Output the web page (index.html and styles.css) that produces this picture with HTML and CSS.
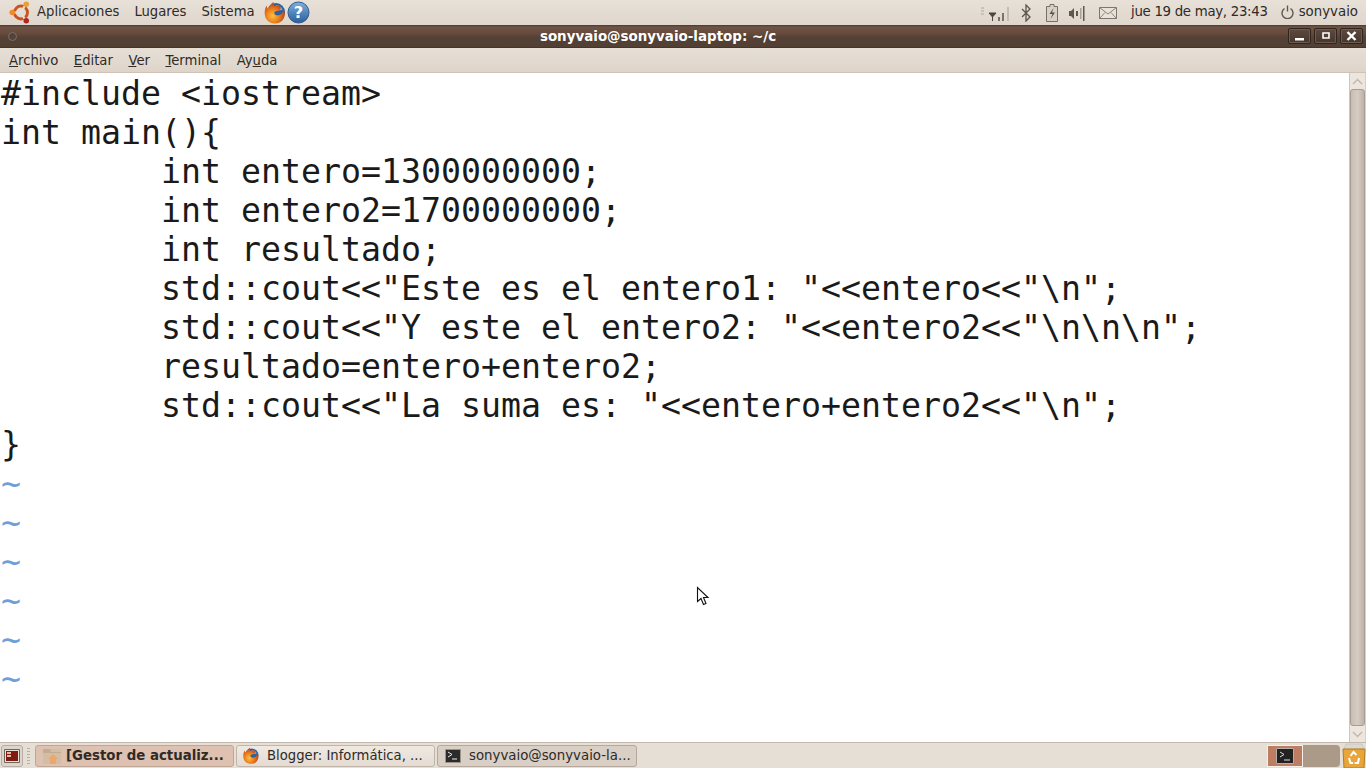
FILE: index.html
```html
<!DOCTYPE html>
<html lang="es">
<head>
<meta charset="utf-8">
<title>sonyvaio@sonyvaio-laptop: ~/c</title>
<link rel="stylesheet" href="styles.css">
</head>
<body>
<svg width="0" height="0" class="defs">
  <defs>
    <radialGradient id="fox" cx="40%" cy="65%" r="65%"><stop offset="0" stop-color="#f9c23c"/><stop offset="0.55" stop-color="#e8761c"/><stop offset="1" stop-color="#b03c18"/></radialGradient>
    <linearGradient id="globe" x1="0" y1="0" x2="0" y2="1"><stop offset="0" stop-color="#7fb0dc"/><stop offset="1" stop-color="#2a5d9c"/></linearGradient>
    <symbol id="firefox" viewBox="0 0 24 24">
      <circle cx="13" cy="11" r="9" fill="#2f5f9e"/>
      <path d="M13 4c3 0 6 2 6.500 5l-6 .5z" fill="#7fb0dc"/>
      <path d="M11 1c-.8 1.500-.6 3 .2 4 2.300-1.300 5.500-.8 6.500 1.200 .7 1.800-1 3.300-3.200 3.600-2.200.5-3.800 1.200-3 3 1 2 4.800 2 6.800.2 1.300-1.200 2.300-3.200 2.200-5 2.200 3.500 1.800 9.300-2.300 12.500-4.300 3.200-11.500 2.300-14.600-2C1 14.500 1 8.500 3.800 4.500c0 1.300.2 2.300 1 3.300C6 5 8.500 2 11 1z" fill="url(#fox)"/>
    </symbol>
  </defs>
</svg>
<div class="screen">
  <header class="top-panel">
    <div class="top-left">
      <svg class="ubuntu" viewBox="0 0 24 24" width="23" height="23">
        <circle cx="12.500" cy="12" r="6.800" fill="none" stroke="#c9541f" stroke-width="3"/>
        <path d="M12.500 12 L3 12 M12.500 12 L18 2.500 M12.500 12 L18 21.500" stroke="#e6dfd6" stroke-width="2.200"/>
        <circle cx="3.400" cy="12" r="2.900" fill="#f08a2c"/>
        <circle cx="18" cy="3.400" r="2.900" fill="#eba035"/>
        <circle cx="18" cy="20.600" r="2.900" fill="#b3261e"/>
      </svg>
      <span class="panel-item">Aplicaciones</span>
      <span class="panel-item">Lugares</span>
      <span class="panel-item">Sistema</span>
      <svg class="launcher" width="24" height="24" viewBox="0 0 24 24"><use href="#firefox"/></svg>
      <svg class="launcher help" width="23" height="23" viewBox="0 0 24 24">
        <circle cx="12" cy="12" r="11" fill="url(#globe)" stroke="#2c5a8c"/>
        <text x="12" y="18" class="help-q">?</text>
      </svg>
    </div>
    <div class="top-right">
      <svg class="tray net" width="28" height="18" viewBox="0 0 28 18">
        <path d="M0 4h3M0 7h3M0 10h3" stroke="#b0a89e"/>
        <path d="M8 9h7l-3.500 4zM11.500 13v4" fill="#4a453f" stroke="#4a453f"/>
        <path d="M17 13h2v4h-2zM21 9h2v8h-2z" fill="#7a736b"/>
        <path d="M26 3h2v14h-2z" fill="#c4bcb2"/>
      </svg>
      <svg class="tray bt" width="12" height="18" viewBox="0 0 12 18"><path d="M2 5l8 8-4 4V1l4 4-8 8" fill="none" stroke="#5a554e" stroke-width="1.300"/></svg>
      <svg class="tray batt" width="12" height="18" viewBox="0 0 12 18"><path d="M4 .5h4v2h3.500v15H.5v-15H4z" fill="#d8d0c6" stroke="#77706a"/><path d="M7.500 4L3.500 10h3l-2 5 4.500-6.500H6z" fill="#55504a"/></svg>
      <svg class="tray vol" width="16" height="16" viewBox="0 0 16 16"><path d="M0 6h2l3-3v11l-3-3H0z" fill="#5d5851"/><path d="M7 6h2v5H7z" fill="#5d5851"/><path d="M14 1h1.500v15H14z" fill="#5d5851"/><path d="M11 3h1.500v11H11z" fill="#a9a299"/></svg>
      <svg class="tray mail" width="18" height="12" viewBox="0 0 18 12"><path d="M.5.5h17v11H.5z" fill="#e8e2da" stroke="#7d766e"/><path d="M.5.5L9 7l8.500-6.500M.5 11.500L6 5.500M17.500 11.500L12 5.500" fill="none" stroke="#8a837b"/></svg>
      <span class="clock">jue 19 de may, 23:43</span>
      <span class="user">
        <svg width="13" height="14" viewBox="0 0 13 14"><path d="M3.500 3.500a5.500 5.500 0 1 0 6 0M6.500 .5v6" fill="none" stroke="#5d5851" stroke-width="1.400"/></svg>
        sonyvaio
      </span>
    </div>
  </header>

  <div class="window">
    <div class="titlebar">
      <span class="win-dot"></span>
      <span class="win-title">sonyvaio@sonyvaio-laptop: ~/c</span>
      <div class="win-buttons">
        <span class="win-btn"><svg width="10" height="10" viewBox="0 0 10 10"><path d="M0 7h9v2.500H0z" fill="#fff"/></svg></span>
        <span class="win-btn"><svg width="10" height="10" viewBox="0 0 10 10"><path d="M2 2h6v5H2z" fill="none" stroke="#fff" stroke-width="1.600"/></svg></span>
        <span class="win-btn"><svg width="11" height="10" viewBox="0 0 11 10"><path d="M1.500 1l8 8M9.500 1l-8 8" stroke="#fff" stroke-width="2.400"/></svg></span>
      </div>
    </div>
    <nav class="menubar">
      <span class="menu-item"><u>A</u>rchivo</span>
      <span class="menu-item"><u>E</u>ditar</span>
      <span class="menu-item"><u>V</u>er</span>
      <span class="menu-item"><u>T</u>erminal</span>
      <span class="menu-item">Ay<u>u</u>da</span>
    </nav>
    <div class="terminal">
      <pre class="code">#include &lt;iostream&gt;
int main(){
        int entero=1300000000;
        int entero2=1700000000;
        int resultado;
        std::cout&lt;&lt;"Este es el entero1: "&lt;&lt;entero&lt;&lt;"\n";
        std::cout&lt;&lt;"Y este el entero2: "&lt;&lt;entero2&lt;&lt;"\n\n\n";
        resultado=entero+entero2;
        std::cout&lt;&lt;"La suma es: "&lt;&lt;entero+entero2&lt;&lt;"\n";
}
<span class="tilde">~
~
~
~
~
~</span></pre>
      <div class="scrollbar">
        <span class="arrow"><svg width="11" height="7" viewBox="0 0 11 7"><path d="M1 6l4.500-4.500L10 6" fill="none" stroke="#c4b9ad" stroke-width="1.500"/></svg></span>
        <span class="thumb"></span>
        <span class="arrow"><svg width="11" height="7" viewBox="0 0 11 7"><path d="M1 1l4.500 4.500L10 1" fill="none" stroke="#c4b9ad" stroke-width="1.500"/></svg></span>
      </div>
    </div>
  </div>

  <footer class="bottom-panel">
    <span class="show-desktop"><svg width="16" height="14" viewBox="0 0 16 14"><path d="M.5.5h15v13H.5z" fill="#e8e2da" stroke="#6d665e"/><path d="M2 2h12v10H2z" fill="#7c1d10"/><path d="M3 3h4v2H3zM3 6h4v2H3z" fill="#e4b9a8"/></svg></span>
    <span class="grip"></span>
    <div class="task active">
      <svg width="20" height="18" viewBox="0 0 20 18"><path d="M1 2h18v15H1z" fill="#d3bda4"/><path d="M1 2h7l1 3h10v1H1z" fill="#c2ac92"/><path d="M11 7l5 5h-2v5H8v-5H6z" fill="#e8a870"/></svg>
      <span class="task-label strong">[Gestor de actualiz...</span>
    </div>
    <div class="task ff">
      <svg width="18" height="18" viewBox="0 0 24 24"><use href="#firefox"/></svg>
      <span class="task-label tight">Blogger: Informática, ...</span>
    </div>
    <div class="task term">
      <svg width="16" height="14" viewBox="0 0 16 14"><path d="M.5.5h15v13H.5z" fill="#2b2b2b" stroke="#9a948c"/><path d="M3 3l4 2.500L3 8" fill="none" stroke="#eee"/><path d="M7 10h5" stroke="#eee"/></svg>
      <span class="task-label">sonyvaio@sonyvaio-la...</span>
    </div>
    <div class="spacer"></div>
    <div class="pager">
      <span class="ws current"><svg width="18" height="16" viewBox="0 0 18 16"><path d="M.5.5h17v15H.5z" fill="#222" stroke="#b5aea6"/><path d="M4 4l4 2.500L4 9" fill="none" stroke="#ddd"/><path d="M8 12h6" stroke="#ddd"/></svg></span>
      <span class="ws"></span>
    </div>
    <svg class="trash" width="24" height="25" viewBox="0 0 24 25">
      <path d="M2 6l2-5h16l2 5z" fill="#dcd9d2" stroke="#b9b5ac" stroke-width=".5"/>
      <path d="M1 6h22l-1 19H2z" fill="#e8a53a" stroke="#b27a22"/>
      <path d="M8.500 13l3-4 3 3M17 15l-1 5h-3.500M7 15l1.500 5H11" fill="none" stroke="#fff" stroke-width="2"/>
    </svg>
  </footer>

  <svg class="cursor" width="14" height="21" viewBox="0 0 14 21"><path d="M1.500 1.500v14l3.500-3 2.500 6 2.500-1-2.500-6h4.500z" fill="#fff" stroke="#111" stroke-width="1.100"/></svg>
</div>
</body>
</html>
```

FILE: styles.css
```css
* { box-sizing: border-box; }
html, body { margin: 0; padding: 0; }
body { width: 1366px; height: 768px; overflow: hidden; font-family: "DejaVu Sans", sans-serif; font-size: 13.2px; color: #2e2a26; }
.defs { position: absolute; }
.screen { position: relative; width: 1366px; height: 768px; display: flex; flex-direction: column; background: #fff; }

.top-panel { height: 25px; flex: none; display: flex; justify-content: space-between; align-items: center; background: linear-gradient(#e8e1d9, #dfd6cc); }
.top-left { display: flex; align-items: center; padding-left: 9px; }
.ubuntu { margin-right: 5px; }
.panel-item { margin-right: 15px; padding-bottom: 2px; }
.panel-item:nth-of-type(3) { margin-right: 8px; }
.launcher { display: block; }
.help-q { font-family: "DejaVu Sans", sans-serif; font-size: 17px; font-weight: bold; fill: #fff; text-anchor: middle; }
.top-right { display: flex; align-items: center; height: 100%; padding-right: 8px; }
.tray { display: block; flex: none; }
.net { margin-right: 11px; }
.bt { margin-right: 14px; }
.batt { margin-right: 11px; }
.vol { margin-right: 14px; }
.mail { margin-right: 14px; }
.clock { margin-right: 13px; letter-spacing: -0.3px; font-size: 13.33px; padding-bottom: 2px; }
.user { display: flex; align-items: center; gap: 5px; font-size: 13.33px; padding-bottom: 2px; }

.window { flex: 1; min-height: 0; display: flex; flex-direction: column; }
.titlebar { height: 23px; flex: none; position: relative; display: flex; align-items: center; justify-content: center; padding-right: 50px; background: linear-gradient(#4a3a30 0, #6f5344 2px, #65493b 9px, #554135 12px, #524034 95%, #3a2d25 100%); }
.win-dot { position: absolute; left: 8px; top: 7px; width: 9px; height: 9px; border-radius: 50%; border: 1px solid #7d6f65; background: #54423a; }
.win-title { color: #fff; font-weight: bold; font-size: 13.45px; }
.win-buttons { position: absolute; right: 3px; top: 3px; display: flex; gap: 3px; }
.win-btn { width: 23px; height: 16px; display: flex; align-items: center; justify-content: center; border: 1px solid #2f241e; border-radius: 2px; box-shadow: inset 0 0 0 1px #6f5a4d; background: linear-gradient(#5e493d, #46362d); }

.menubar { height: 25px; flex: none; display: flex; align-items: center; padding: 1px 0 0 9px; gap: 15.5px; background: linear-gradient(#e6dfd6, #ded4ca); border-bottom: 1px solid #cfc3b6; }
.menu-item { line-height: 24px; }

.terminal { flex: 1; min-height: 0; display: flex; background: #fff; }
.code { flex: 1; margin: 0; padding: 1px 0 0 1px; font-family: "DejaVu Sans Mono", monospace; font-size: 33.23px; line-height: 39px; color: #1a1a1a; overflow: hidden; }
.tilde { color: #6f9fd8; }
.scrollbar { width: 17px; flex: none; display: flex; flex-direction: column; background: #e6ded5; border-left: 1px solid #cfc5ba; border-right: 1px solid #d8cfc5; }
.arrow { height: 16px; flex: none; display: flex; align-items: center; justify-content: center; background: #ece6df; }
.thumb { flex: 1; background: linear-gradient(90deg, #c9bdb1, #d6ccc2 50%, #bfb3a7); border: 1px solid #a89c90; border-radius: 3px; }

.bottom-panel { height: 26px; flex: none; display: flex; align-items: center; padding: 0 0 0 1px; background: #e6dfd6; border-top: 1px solid #c5b9ad; }
.show-desktop { width: 22px; height: 22px; display: flex; align-items: center; justify-content: center; border: 1px solid #b8aea3; border-radius: 3px; background: #ddd5cb; }
.grip { width: 3px; height: 16px; margin: 0 5px 0 4px; flex: none; background: repeating-linear-gradient(#b8aea2 0 1px, transparent 1px 3px); }
.task { height: 22px; display: flex; align-items: center; margin-right: 2px; border: 1px solid #c2b6aa; border-radius: 3px; overflow: hidden; white-space: nowrap; flex: none; background: linear-gradient(#efe9e2, #e4dcd3); }
.task.active { width: 199px; padding-left: 6px; gap: 4px; background: #dfc1b2; border-color: #bfa798; font-size: 13.33px; }
.task.ff { width: 199px; padding-left: 5px; gap: 7px; }
.task.term { width: 200px; padding-left: 7px; gap: 8px; background: #d9cfc4; border-color: #b5a99d; font-size: 13.33px; }
.strong { font-weight: bold; }
.spacer { flex: 1; }
.pager { display: flex; width: 73px; height: 22px; margin-right: 2px; background: #ac9a88; border-radius: 0 4px 4px 0; }
.ws { width: 36px; height: 100%; display: block; }
.ws.current { display: flex; align-items: center; justify-content: center; background: #bd7d62; border: 1px solid #f4efe9; }
.trash { display: block; flex: none; }

.cursor { position: absolute; left: 696px; top: 586px; }
```
